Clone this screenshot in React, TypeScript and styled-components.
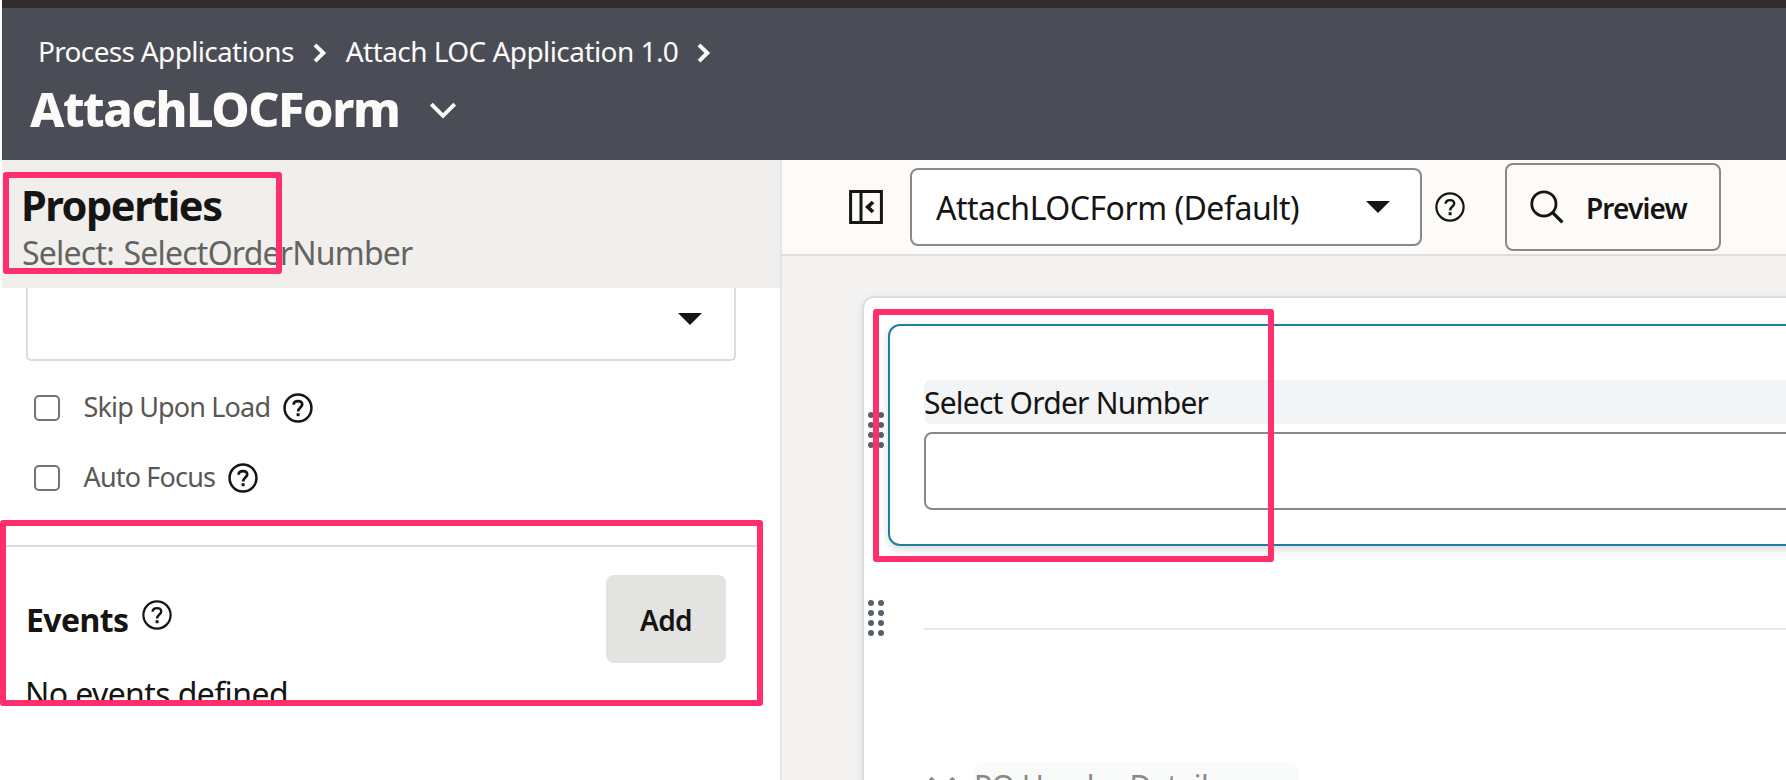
import React from 'react';
import styled, { createGlobalStyle } from 'styled-components';

const GlobalStyle = createGlobalStyle`
  *, *::before, *::after { box-sizing: border-box; }
  html, body { margin: 0; padding: 0; background: #fff; }
  body {
    font-family: 'Noto Sans', 'Open Sans', sans-serif;
    color: #161513;
    overflow: hidden;
  }
  svg { display: block; flex: none; }
`;

const Page = styled.div`
  position: relative;
  display: flex;
  flex-direction: column;
  width: 1786px;
  height: 780px;
  padding-left: 2px;
  overflow: hidden;
  background: #fff;
`;

const TopStrip = styled.div`
  flex: none;
  height: 8px;
  background: #312d2a;
`;

const Header = styled.header`
  flex: none;
  height: 152px;
  padding-top: 23px;
  background: #4a4d55;
  color: #fcfbfa;
`;

const Breadcrumbs = styled.nav`
  display: flex;
  align-items: center;
  height: 40px;
  padding-left: 36px;
`;

const Crumb = styled.span<{ $spacing: number }>`
  font-size: 28px;
  line-height: 40px;
  letter-spacing: ${(p) => p.$spacing}px;
  white-space: nowrap;
`;

const CrumbArrow = styled.svg`
  margin: 4px 19px 0 19px;
`;

const TitleRow = styled.div`
  display: flex;
  align-items: center;
  height: 60px;
  margin-top: 7px;
  padding-left: 28px;
`;

const Title = styled.h1`
  margin: 0;
  width: 399px;
  font-size: 48.5px;
  font-weight: 800;
  line-height: 60px;
  letter-spacing: -1.45px;
`;

const TitleToggle = styled.span`
  padding-top: 6px;
`;

const Body = styled.div`
  flex: 1;
  display: flex;
  min-height: 0;
`;

const Sidebar = styled.aside`
  flex: none;
  display: flex;
  flex-direction: column;
  width: 780px;
  border-right: 2px solid #e2e4eb;
  background: #fff;
`;

const SidebarHead = styled.div`
  flex: none;
  height: 128px;
  padding: 20px 0 0 19px;
  background: #f0efed;
`;

const SidebarTitle = styled.h2`
  margin: 0;
  font-size: 41.5px;
  font-weight: 700;
  line-height: 50px;
  letter-spacing: -1.45px;
`;

const SidebarSubtitle = styled.div`
  margin-top: 3px;
  padding-left: 1px;
  font-size: 32px;
  line-height: 40px;
  letter-spacing: -0.78px;
  word-spacing: 2px;
  color: #65635f;
`;

const PropertySelect = styled.div`
  display: flex;
  justify-content: flex-end;
  flex: none;
  width: 710px;
  height: 73px;
  margin-left: 24px;
  padding: 25px 32px 0 0;
  border: 2px solid #dcdcd8;
  border-top: 0;
  border-radius: 0 0 5px 5px;
`;

const Options = styled.div`
  display: flex;
  flex-direction: column;
  gap: 26px;
  padding: 25px 0 0 32px;
`;

const Option = styled.label`
  display: flex;
  align-items: center;
  height: 44px;
`;

const Checkbox = styled.span`
  flex: none;
  width: 26px;
  height: 26px;
  margin-right: 23.5px;
  border: 2px solid #75736f;
  border-radius: 5px;
`;

const OptionText = styled.span`
  margin-right: 13px;
  padding-bottom: 2px;
  font-size: 27px;
  line-height: 38px;
  letter-spacing: -0.84px;
  color: #5a5854;
`;

const Divider = styled.hr`
  flex: none;
  height: 2px;
  width: 754px;
  margin: 45px 0 0 4px;
  border: 0;
  background: #dcdcd8;
`;

const EventsRow = styled.div`
  display: flex;
  align-items: center;
  flex: none;
  height: 88px;
  margin: 28px 54px 0 24px;
`;

const EventsTitle = styled.h3`
  margin: 0 14px 0 0;
  padding-top: 2px;
  font-size: 32px;
  font-weight: 700;
  line-height: 44px;
  letter-spacing: -0.6px;
`;

const EventsHelp = styled.span`
  margin-bottom: 8px;
`;

const AddButton = styled.button`
  width: 120px;
  height: 88px;
  margin-left: auto;
  padding: 1px 0 0;
  border: 0;
  border-radius: 8px;
  background: #e3e3e1;
  color: inherit;
  font: 600 28px/40px 'Noto Sans', sans-serif;
  letter-spacing: -0.6px;
`;

const EmptyText = styled.p`
  margin: 9px 0 0 23px;
  font-size: 32px;
  line-height: 44px;
  letter-spacing: -0.6px;
`;

const Main = styled.main`
  flex: 1;
  display: flex;
  flex-direction: column;
  min-width: 0;
`;

const Toolbar = styled.div`
  flex: none;
  display: flex;
  align-items: center;
  height: 96px;
  padding: 0 0 0 67px;
  border-bottom: 2px solid #dedddb;
  background: #fcfbfa;
`;

const LayoutSelect = styled.div`
  display: flex;
  align-items: center;
  justify-content: space-between;
  width: 512px;
  height: 78px;
  margin: 0 13px 0 27px;
  padding: 0 30px 0 24px;
  border: 2px solid #8b8986;
  border-radius: 8px;
  background: #fff;
  font-size: 32px;
  letter-spacing: -0.5px;
  white-space: nowrap;
`;

const PreviewButton = styled.button`
  display: flex;
  align-items: center;
  gap: 22px;
  width: 216px;
  height: 88px;
  margin-left: 40px;
  padding: 0 0 0 23px;
  border: 2px solid #8b8986;
  border-radius: 8px;
  background: transparent;
  color: inherit;
  font: 600 28px/40px 'Noto Sans', sans-serif;
  letter-spacing: -0.85px;
`;

const PreviewText = styled.span`
  padding-top: 2px;
`;

const Canvas = styled.div`
  flex: 1;
  min-height: 0;
  padding: 40px 0 0 80px;
  overflow: hidden;
  background: #f4f3f1;
`;

const FormCard = styled.div`
  width: 1100px;
  height: 700px;
  padding-top: 26px;
  border: 2px solid #d6dfe6;
  border-radius: 12px;
  background: #fff;
  box-shadow: 0 2px 8px rgba(0, 0, 0, 0.08);
`;

const FormRow = styled.div<{ $height: number }>`
  display: flex;
  height: ${(p) => p.$height}px;
`;

const Handle = styled.div<{ $lift: number }>`
  flex: none;
  display: flex;
  align-items: center;
  width: 24px;
  padding: 0 0 ${(p) => p.$lift}px 4px;
`;

const SelectedField = styled.section`
  flex: 1;
  padding: 54px 34px 0;
  border: 2px solid #227e9e;
  border-radius: 12px;
  background: #fff;
  box-shadow: 0 4px 10px rgba(0, 0, 0, 0.14);
`;

const FieldLabel = styled.div`
  height: 44px;
  border-radius: 8px;
  background: #f3f4f6;
  font-size: 30px;
  line-height: 46px;
  letter-spacing: -0.78px;
`;

const FieldInput = styled.div`
  height: 78px;
  margin-top: 8px;
  border: 2px solid #8b8986;
  border-radius: 8px;
`;

const FormRule = styled.div`
  flex: 1;
  height: 2px;
  margin: 82px 0 0 36px;
  background: #e7e7e7;
`;

const GroupHeader = styled.div`
  display: flex;
  align-items: center;
  gap: 18px;
  height: 44px;
  margin: 51px 0 0 64px;
  color: #8b8986;
`;

const GroupTitle = styled.div`
  width: 325px;
  height: 44px;
  border-radius: 8px;
  background: #f9fafa;
  font-size: 30px;
  line-height: 45px;
  letter-spacing: -0.55px;
`;

const Highlight = styled.div<{ $x: number; $y: number; $w: number; $h: number }>`
  position: absolute;
  left: ${(p) => p.$x}px;
  top: ${(p) => p.$y}px;
  width: ${(p) => p.$w}px;
  height: ${(p) => p.$h}px;
  border: 6px solid #ff2e6c;
  border-radius: 3px;
`;

const ArrowRight = () => (
  <CrumbArrow width="14" height="20" viewBox="0 0 14 20" fill="none" stroke="currentColor" strokeWidth="4">
    <path d="M2 1.8 10.3 10 2 18.2" />
  </CrumbArrow>
);

const ChevronDown = () => (
  <svg width="28" height="18" viewBox="0 0 28 18" fill="none" stroke="currentColor" strokeWidth="4">
    <path d="M2.3 2.2 14 13.8 25.7 2.2" />
  </svg>
);

const Caret = () => (
  <svg width="24" height="12" viewBox="0 0 24 12" fill="#161513">
    <path d="M0 0h24L12 12z" />
  </svg>
);

const Help = ({ stroke = 2.2 }: { stroke?: number }) => (
  <svg width="30" height="30" viewBox="0 0 30 30" fill="none" stroke="#161513" strokeWidth={stroke}>
    <circle cx="15" cy="15" r={14.7 - stroke / 2} />
    <path d="M10.6 11.8C10.7 9.3 12.4 8.1 15 8.1c2.7 0 4.2 1.4 4.2 3.5 0 2.9-4.1 3.1-4.1 6.9" strokeWidth={stroke + 0.2} />
    <path d="M13.6 20.2h3v3h-3z" fill="#161513" stroke="none" />
  </svg>
);

const CollapsePanel = () => (
  <svg width="34" height="34" viewBox="0 0 34 34" fill="none" stroke="#161513" strokeWidth="3">
    <path d="M1.6 1.6h30.8v30.8H1.6zM12 2v30" />
    <path d="M24 12 18.8 17l5.2 5" strokeWidth="3.8" />
  </svg>
);

const Search = () => (
  <svg width="34" height="34" viewBox="0 0 34 34" fill="none" stroke="#161513">
    <circle cx="13.9" cy="13.9" r="12.1" strokeWidth="2.8" />
    <path d="M22.4 22.4 32.4 32.4" strokeWidth="3.4" />
  </svg>
);

const GripDots = () => (
  <svg width="16" height="36" viewBox="0 0 16 36" fill="#56616b">
    {[3, 13, 23, 33].map((y) => (
      <React.Fragment key={y}>
        <circle cx="3" cy={y} r="3" />
        <circle cx="13" cy={y} r="3" />
      </React.Fragment>
    ))}
  </svg>
);

export default function App() {
  return (
    <>
      <GlobalStyle />
      <Page>
        <TopStrip />
        <Header>
          <Breadcrumbs>
            <Crumb $spacing={-0.67}>Process Applications</Crumb>
            <ArrowRight />
            <Crumb $spacing={-0.56}>Attach LOC Application 1.0</Crumb>
            <ArrowRight />
          </Breadcrumbs>
          <TitleRow>
            <Title>AttachLOCForm</Title>
            <TitleToggle>
              <ChevronDown />
            </TitleToggle>
          </TitleRow>
        </Header>
        <Body>
          <Sidebar>
            <SidebarHead>
              <SidebarTitle>Properties</SidebarTitle>
              <SidebarSubtitle>Select: SelectOrderNumber</SidebarSubtitle>
            </SidebarHead>
            <PropertySelect>
              <Caret />
            </PropertySelect>
            <Options>
              {['Skip Upon Load', 'Auto Focus'].map((name) => (
                <Option key={name}>
                  <Checkbox />
                  <OptionText>{name}</OptionText>
                  <Help stroke={2.5} />
                </Option>
              ))}
            </Options>
            <Divider />
            <EventsRow>
              <EventsTitle>Events</EventsTitle>
              <EventsHelp>
                <Help />
              </EventsHelp>
              <AddButton>Add</AddButton>
            </EventsRow>
            <EmptyText>No events defined</EmptyText>
          </Sidebar>
          <Main>
            <Toolbar>
              <CollapsePanel />
              <LayoutSelect>
                AttachLOCForm (Default)
                <Caret />
              </LayoutSelect>
              <Help />
              <PreviewButton>
                <Search />
                <PreviewText>Preview</PreviewText>
              </PreviewButton>
            </Toolbar>
            <Canvas>
              <FormCard>
                <FormRow $height={222}>
                  <Handle $lift={10}>
                    <GripDots />
                  </Handle>
                  <SelectedField>
                    <FieldLabel>Select Order Number</FieldLabel>
                    <FieldInput />
                  </SelectedField>
                </FormRow>
                <FormRow $height={166}>
                  <Handle $lift={22}>
                    <GripDots />
                  </Handle>
                  <FormRule />
                </FormRow>
                <GroupHeader>
                  <ChevronDown />
                  <GroupTitle>PO Header Details</GroupTitle>
                </GroupHeader>
              </FormCard>
            </Canvas>
          </Main>
        </Body>
        <Highlight $x={3} $y={172} $w={279} $h={102} />
        <Highlight $x={0} $y={520} $w={763} $h={186} />
        <Highlight $x={873} $y={308.5} $w={401} $h={253.5} />
      </Page>
    </>
  );
}
